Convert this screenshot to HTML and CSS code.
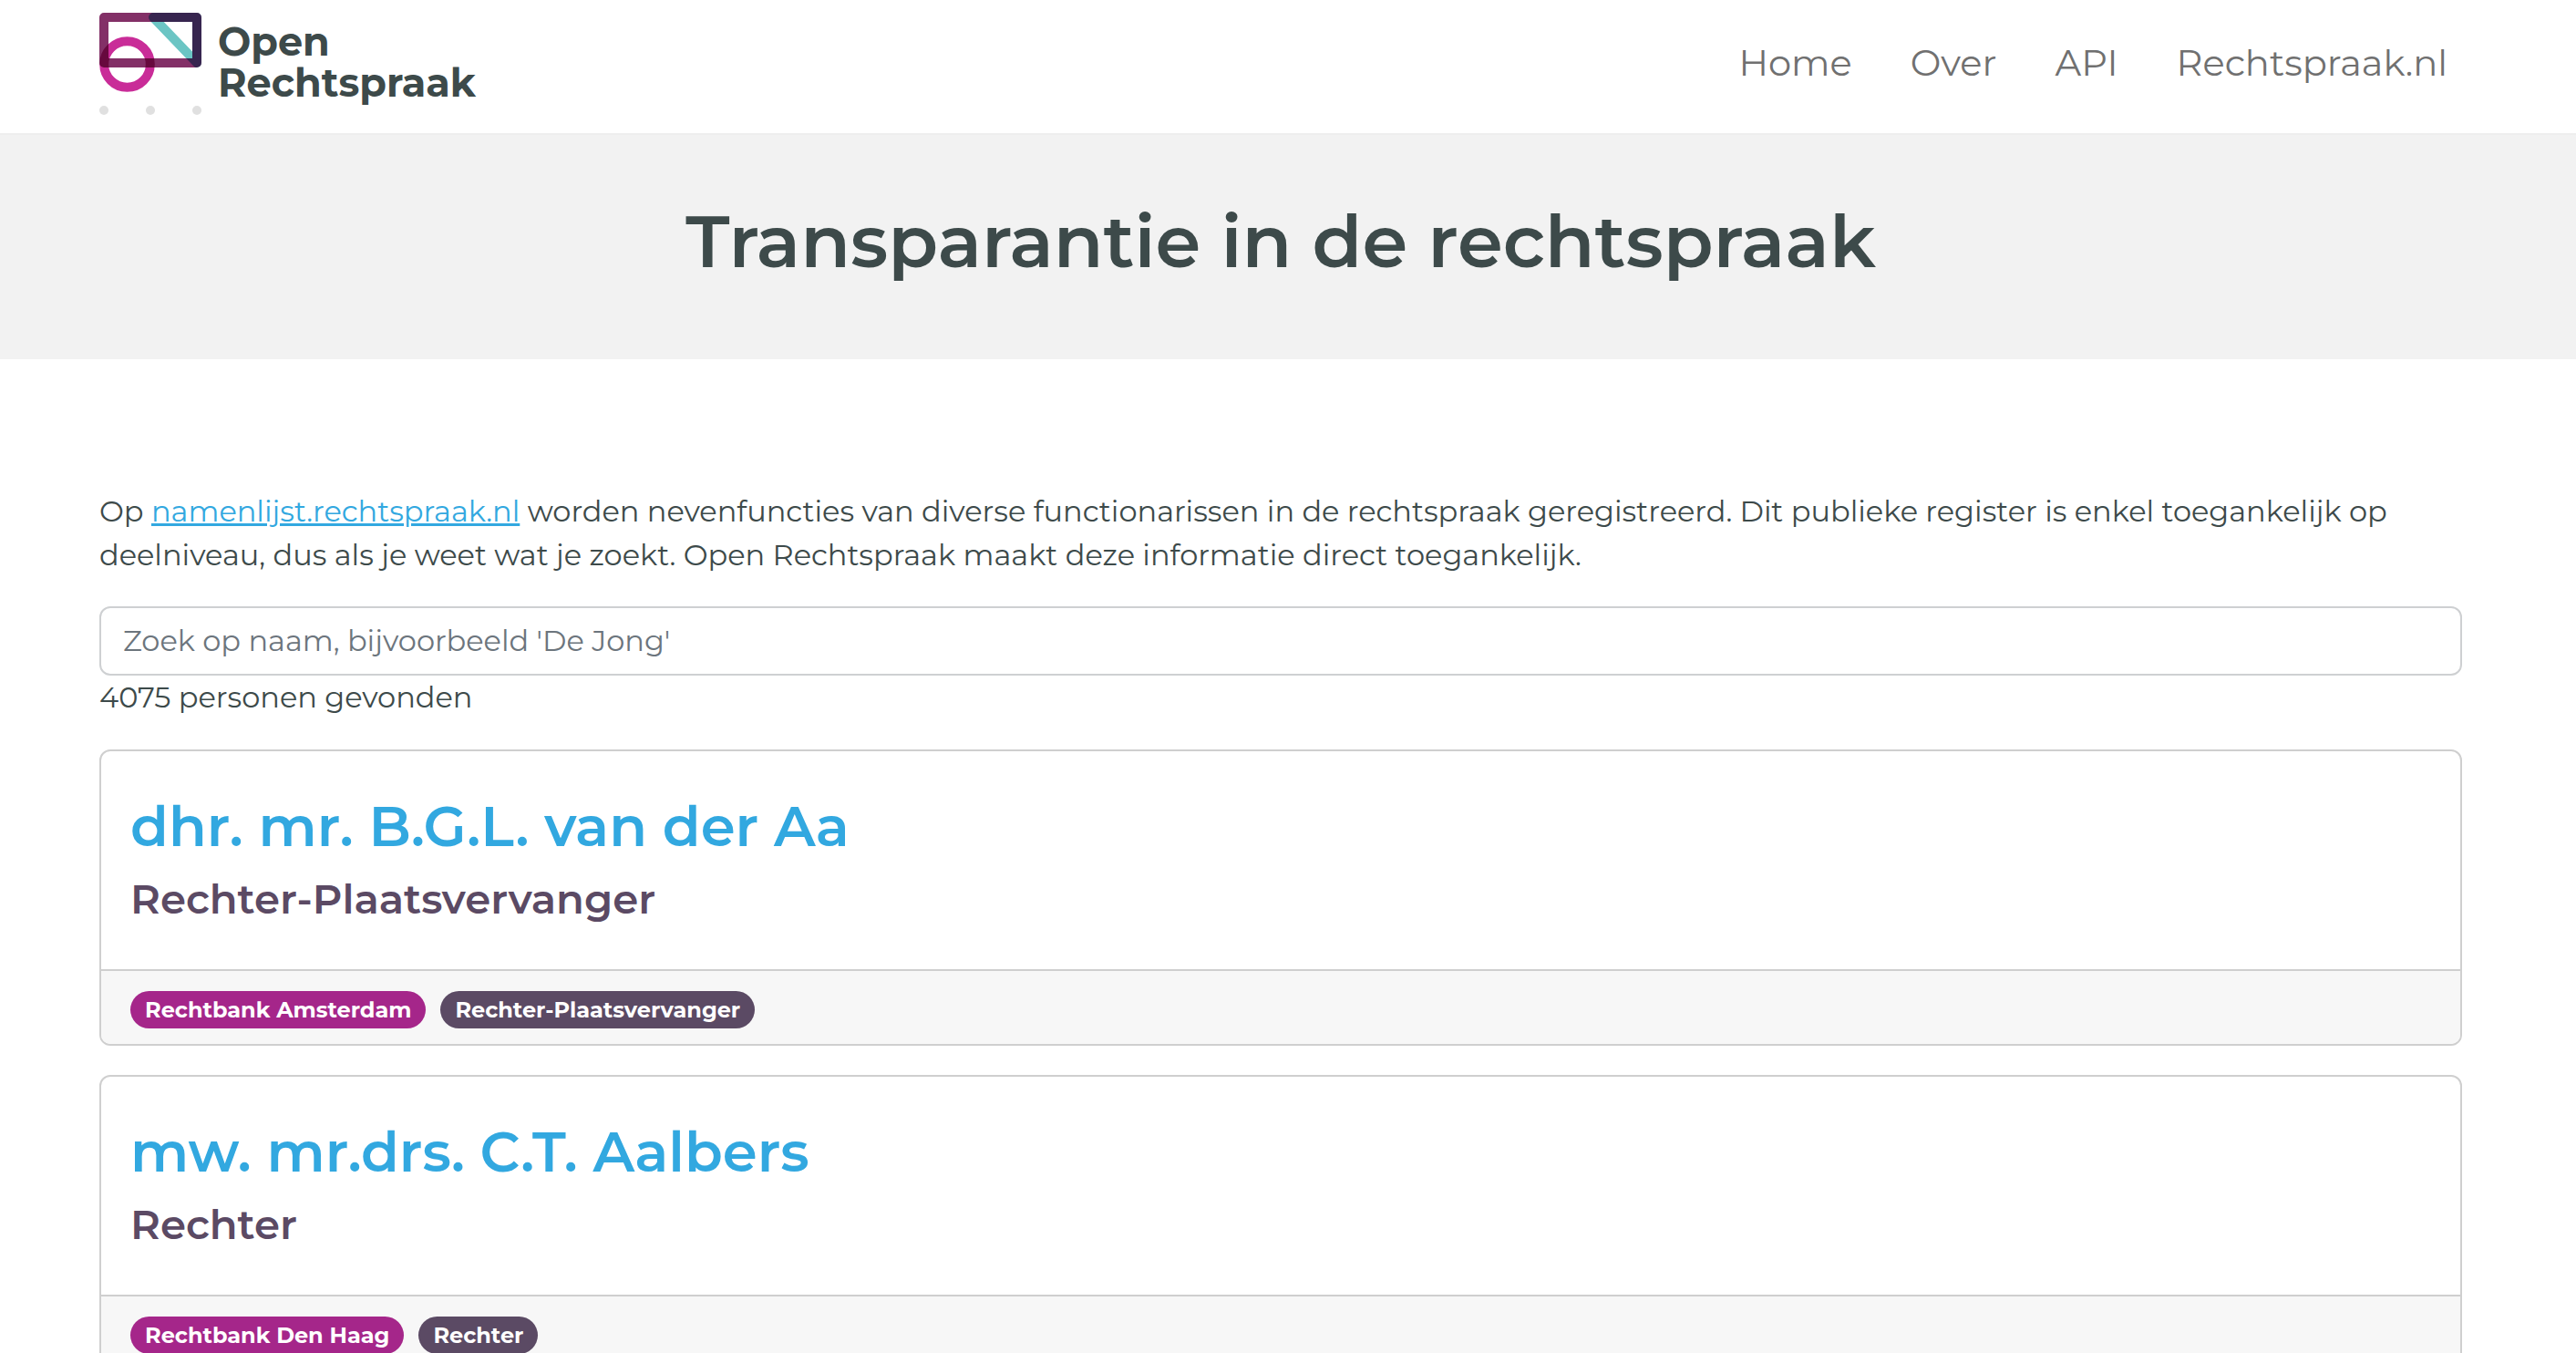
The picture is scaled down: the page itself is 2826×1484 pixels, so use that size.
FILE: index.html
```html
<!DOCTYPE html>
<html lang="nl">
<head>
<meta charset="utf-8">
<meta name="viewport" content="width=device-width, initial-scale=1">
<title>Open Rechtspraak</title>
<link rel="stylesheet" href="styles.css">
</head>
<body>
<header class="site-header">
  <a class="brand" href="#">
    <svg class="brand-mark" viewBox="0 0 112 112" aria-hidden="true">
      <g fill="none" stroke-width="10" stroke-linejoin="round">
        <rect x="5" y="5" width="102" height="50" stroke="#833067"/>
        <path d="M59 5H107V55Z" stroke="#6bc5c4"/>
        <circle cx="30.5" cy="56.5" r="25.3" stroke="#c92c98"/>
      </g>
      <g fill="#e0e0e0">
        <circle cx="5" cy="107" r="5"/>
        <circle cx="56" cy="107" r="5"/>
        <circle cx="107" cy="107" r="5"/>
      </g>
    </svg>
    <span class="brand-name">Open<br>Rechtspraak</span>
  </a>
  <nav class="site-nav">
    <a href="#">Home</a>
    <a href="#">Over</a>
    <a href="#">API</a>
    <a href="#">Rechtspraak.nl</a>
  </nav>
</header>
<section class="hero">
  <h1>Transparantie in de rechtspraak</h1>
</section>
<main class="content">
  <p class="intro">Op <a href="#">namenlijst.rechtspraak.nl</a> worden nevenfuncties van diverse functionarissen in de rechtspraak geregistreerd. Dit publieke register is enkel toegankelijk op deelniveau, dus als je weet wat je zoekt. Open Rechtspraak maakt deze informatie direct toegankelijk.</p>
  <input class="search" type="search" aria-label="Zoek op naam" placeholder="Zoek op naam, bijvoorbeeld 'De Jong'">
  <p class="count">4075 personen gevonden</p>
  <article class="card">
    <div class="card-body">
      <h2><a href="#">dhr. mr. B.G.L. van der Aa</a></h2>
      <h3>Rechter-Plaatsvervanger</h3>
    </div>
    <footer class="card-footer">
      <span class="badge badge-court">Rechtbank Amsterdam</span>
      <span class="badge badge-role">Rechter-Plaatsvervanger</span>
    </footer>
  </article>
  <article class="card">
    <div class="card-body">
      <h2><a href="#">mw. mr.drs. C.T. Aalbers</a></h2>
      <h3>Rechter</h3>
    </div>
    <footer class="card-footer">
      <span class="badge badge-court">Rechtbank Den Haag</span>
      <span class="badge badge-role">Rechter</span>
    </footer>
  </article>
</main>
</body>
</html>
```

FILE: styles.css
```css
* {
  box-sizing: border-box;
}

body {
  margin: 0;
  background: #fff;
  color: #3d4a4a;
  font-family: Montserrat, Inter, "Liberation Sans", sans-serif;
  font-size: 32px;
  line-height: 48px;
}

h1,
h2,
h3,
p {
  margin: 0;
}

a {
  color: #32a8e0;
}

.site-header {
  display: flex;
  align-items: flex-start;
  justify-content: space-between;
  padding: 14px 141px 20px 109px;
  border-bottom: 2px solid #eee;
}

.brand {
  display: flex;
  gap: 18px;
  color: #3d4a4a;
  text-decoration: none;
}

.brand-mark {
  width: 112px;
  height: 112px;
  isolation: isolate;
}

.brand-mark g > * {
  mix-blend-mode: multiply;
}

.brand-name {
  padding-top: 9px;
  font-size: 43px;
  font-weight: 700;
  line-height: 45px;
}

.site-nav {
  display: flex;
  gap: 64px;
  padding-top: 31px;
  font-size: 40px;
}

.site-nav a {
  color: #707070;
  text-decoration: none;
}

.hero {
  padding: 69px 125px 81px 109px;
  background: #f2f2f2;
  text-align: center;
}

.hero h1 {
  font-size: 80px;
  font-weight: 600;
  line-height: 96px;
}

.content {
  padding: 143px 125px 0 109px;
}

.search {
  display: block;
  width: 100%;
  height: 76px;
  margin-top: 32px;
  padding: 0 24px 2px;
  border: 2px solid #ced0d2;
  border-radius: 12px;
  background: #fff;
  color: inherit;
  font: inherit;
}

.search::placeholder {
  color: #6c757d;
  opacity: 1;
}

.card {
  margin-top: 32px;
  overflow: hidden;
  border: 2px solid #cfcfcf;
  border-radius: 12px;
}

.count + .card {
  margin-top: 33px;
}

.card-body {
  padding: 46px 32px 50px;
}

.card h2 {
  font-size: 61px;
  font-weight: 600;
  line-height: 73px;
}

.card h2 a {
  text-decoration: none;
}

.card h3 {
  margin-top: 16px;
  color: #5b4a64;
  font-size: 45px;
  font-weight: 600;
  line-height: 54px;
}

.card-footer {
  display: flex;
  gap: 16px;
  padding: 22px 32px 17px;
  border-top: 2px solid #cfcfcf;
  background: #f7f7f7;
}

.badge {
  padding: 0 16px;
  border-radius: 24px;
  color: #fff;
  font-size: 24px;
  font-weight: 700;
  line-height: 41px;
}

.badge-court {
  background: #a5268a;
}

.badge-role {
  background: #5b4a64;
}
```
